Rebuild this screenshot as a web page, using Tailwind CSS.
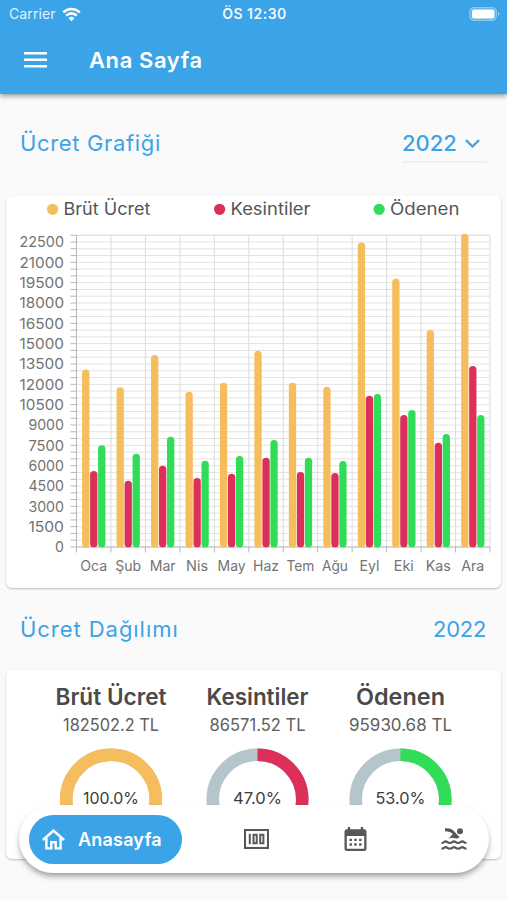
<!DOCTYPE html>
<html lang="tr">
  <head>
    <meta charset="UTF-8" />
    <meta name="viewport" content="width=device-width, initial-scale=1.0" />
    <title>Ana Sayfa</title>
    <script src="https://cdn.jsdelivr.net/npm/@tailwindcss/browser@4"></script>
  </head>
  <body
    class="relative h-[900px] overflow-hidden bg-[#fafafa] font-['Inter',sans-serif] text-[#4a4a4a]"
  >
    <!-- header -->
    <header class="relative h-[94px] bg-[#3ba3e7] text-white shadow-[0_2px_5px_rgba(0,0,0,0.4)]">
      <div class="grid h-7 grid-cols-3 items-center pl-[9px] pr-[7px] text-sm">
        <div class="flex items-center gap-1.5 text-white/85">
          <span class="tracking-[0.1px]">Carrier</span>
          <svg class="h-[15px] w-[19px]" viewBox="0 0 19 15" fill="none" stroke="#fff" stroke-width="2.6">
            <path d="M1.2 5.4a11.8 11.8 0 0 1 16.6 0" />
            <path d="M4.2 8.6a7.5 7.5 0 0 1 10.6 0" />
            <path d="M9.5 14.2 6.6 11.2a4.2 4.2 0 0 1 5.8 0z" fill="#fff" stroke="none" />
          </svg>
        </div>
        <span class="text-center font-semibold tracking-[0.5px] text-white/95">ÖS 12:30</span>
        <svg class="h-[14px] w-[31px] justify-self-end" viewBox="0 0 31 14">
          <rect x=".8" y=".6" width="26.6" height="12.8" rx="4" fill="#fff" fill-opacity=".2" stroke="#fff" stroke-opacity=".4" />
          <rect x="3" y="2.6" width="22.4" height="8.8" rx="2" fill="#fff" />
          <path d="M29 5v4c1.6-.6 1.6-3.4 0-4z" fill="#fff" fill-opacity=".5" />
        </svg>
      </div>
      <div class="flex h-16 items-center pl-6">
        <svg class="h-4 w-[23px]" viewBox="0 0 23 16" fill="#fff">
          <path d="M0 0h23v2.5H0zM0 6.5h23V9H0zM0 13h23v2.5H0z" />
        </svg>
        <h1 class="ml-[42px] text-[22px] font-semibold tracking-[0.6px]">Ana Sayfa</h1>
      </div>
    </header>

    <main class="px-1.5">
      <!-- monthly chart -->
      <div class="flex h-[102px] items-center justify-between pb-1 pl-[14px] pr-[14px] text-[22px] text-[#3ba3e7]">
        <h2 class="tracking-[0.65px]">Ücret Grafiği</h2>
        <button class="mt-[2px] flex h-[38px] w-[85px] items-center justify-between border-b-2 border-[#eeeeee] pr-[7px] font-medium">
          <span>2022</span>
          <svg class="h-[9px] w-[15px]" viewBox="0 0 15 9" fill="none" stroke="currentColor" stroke-width="2.3">
            <path d="m1 1.2 6.5 6.3L14 1.2" />
          </svg>
        </button>
      </div>
      <section class="h-[392px] rounded-md bg-white shadow-[0_1px_2px_rgba(0,0,0,0.25)]">
        <svg id="chart" class="block h-[392px] w-[496px]" viewBox="6 196 496 392"></svg>
      </section>

      <!-- distribution -->
      <div class="flex h-[82px] items-center justify-between pl-[14px] pr-[15px] text-[22px] text-[#3ba3e7]">
        <h2 class="tracking-[0.95px]">Ücret Dağılımı</h2>
        <span class="tracking-[-0.3px]">2022</span>
      </div>
      <section class="h-[189px] rounded-md bg-white shadow-[0_1px_2px_rgba(0,0,0,0.25)]">
        <svg id="rings" class="block h-[189px] w-[496px]" viewBox="6 670 496 189"></svg>
      </section>
    </main>

    <!-- bottom navigation -->
    <nav
      class="absolute bottom-[27px] left-[19px] flex h-[68px] w-[470px] items-center rounded-full bg-white pl-[10px] text-[#575757] shadow-[0_4px_6px_-1px_rgba(0,0,0,0.4)]"
    >
      <a class="flex h-[49px] w-[153px] items-center rounded-full bg-[#3ba3e7] pl-[13px] text-white">
        <svg class="h-[21px] w-[23px]" viewBox="0 0 23 21" fill="none" stroke="currentColor" stroke-width="2.4">
          <path d="M.9 11 11.5 1.6 22.1 11" />
          <path d="M4.4 8.6v10.8h4.9v-6.2h4.4v6.2h4.9V8.6" />
        </svg>
        <span class="ml-[13px] text-[18px] font-semibold tracking-[0.2px]">Anasayfa</span>
      </a>
      <svg class="ml-[62px] h-[20px] w-[25px]" viewBox="0 0 25 20" fill="none" stroke="currentColor">
        <rect x="1" y="1" width="23" height="18" stroke-width="2.1" />
        <path d="M5.8 4.800v10.400" stroke-width="2" />
        <path d="M9.500 5.800h3.200v8.400H9.500zM16.200 5.800h3.200v8.400h-3.200z" stroke-width="2" />
      </svg>
      <svg class="ml-[75px] h-6 w-[23px]" viewBox="0 0 23 24" fill="currentColor">
        <path fill-rule="evenodd" d="M3.8 0h2.4v2.2h10.6V0h2.4v2.2h1A2.3 2.3 0 0 1 22.5 4.5v17.2A2.3 2.3 0 0 1 20.2 24H2.8A2.3 2.3 0 0 1 .5 21.7V4.500A2.3 2.3 0 0 1 2.8 2.2h1zM2.8 9v12.8h17.4V9z" />
        <path d="M5.500 11.700h2.400v2.400H5.500zM10.300 11.700h2.400v2.400h-2.400zM15.100 11.700h2.400v2.400h-2.400zM5.500 16.300h2.400v2.400H5.500zM10.300 16.300h2.400v2.400h-2.400zM15.100 16.300h2.400v2.400h-2.400z" />
      </svg>
      <svg class="ml-[74px] h-[24px] w-[26px]" viewBox="0 0 26 24" fill="currentColor">
        <circle cx="19" cy="4.2" r="3" />
        <path d="M4 1.300c4-.2 6.500.5 8.300 2.300l6.200 6.300c-1.500 1.500-2.900 2-4.500 1.400-2.200-.8-4.500-.9-6.800.6l4.600-4.800C9.800 5 7.500 4.200 4 4.200z" />
        <path d="M.5 16c2.500 0 2.500-1.600 4.200-1.600s1.800 1.600 4.100 1.600 2.500-1.600 4.200-1.600 1.800 1.600 4.100 1.600 2.500-1.600 4.200-1.600 1.800 1.600 4.200 1.600M.5 21.700c2.500 0 2.500-1.600 4.200-1.600s1.800 1.600 4.100 1.600 2.500-1.600 4.200-1.600 1.800 1.600 4.100 1.600 2.500-1.600 4.200-1.600 1.800 1.600 4.200 1.600" fill="none" stroke="currentColor" stroke-width="2.200" />
      </svg>
    </nav>

    <script>
      const months = ["Oca", "Şub", "Mar", "Nis", "May", "Haz", "Tem", "Ağu", "Eyl", "Eki", "Kas", "Ara"];
      const series = [
        { name: "Brüt Ücret", color: "#f5bd5b", x: 47, width: 87,
          values: [13100, 11780, 14160, 11450, 12120, 14480, 12120, 11820, 22470, 19800, 16000, 23100] },
        { name: "Kesintiler", color: "#dc3058", x: 214, width: 80,
          values: [5600, 4890, 6000, 5090, 5400, 6590, 5530, 5460, 11160, 9740, 7690, 13350] },
        { name: "Ödenen", color: "#30dc58", x: 373.5, width: 69.5,
          values: [7500, 6880, 8135, 6365, 6710, 7890, 6585, 6340, 11280, 10100, 8330, 9735] },
      ];
      const left = 76.5, right = 490, base = 547, unit = 305 / 22500;
      const step = (right - left) / 12;
      const yOf = (v) => base - v * unit;
      const line = (x1, y1, x2, y2, color) =>
        `<line x1="${x1}" y1="${y1}" x2="${x2}" y2="${y2}" stroke="${color}"/>`;
      // textLength keeps labels at a fixed width
      const label = (x, y, text, size, width, anchor, fill, weight = 400) =>
        `<text x="${x}" y="${y}" font-size="${size}" textLength="${width}" lengthAdjust="spacingAndGlyphs" text-anchor="${anchor}" fill="${fill}" font-weight="${weight}">${text}</text>`;

      let out = "";
      for (let v = 0; v <= 23000; v += 500) {
        out += line(left, yOf(v), right, yOf(v), v === 23000 ? "#d4d4d4" : "#e3e3e3");
        out += line(left - 6, yOf(v), left, yOf(v), "#b8b8b8");
        if (v % 1500 === 0) {
          const s = String(v);
          out += label(64, yOf(v) + 5.2, s, 14.5, s.length * 8.9, "end", "#737373");
        }
      }
      for (let i = 0; i <= 12; i++) {
        const x = left + i * step;
        out += line(x, yOf(23000), x, base, i ? "#dcdcdc" : "#b8b8b8");
        out += line(x, base, x, base + 5.5, "#b8b8b8");
      }
      out += line(left, base, right, base, "#b8b8b8");
      const labelWidths = [27, 26, 26, 22, 28, 26, 28, 26, 20, 20, 25, 23];
      months.forEach((m, i) => {
        out += label(left + (i + 0.5) * step, 570.5, m, 14, labelWidths[i], "middle", "#737373");
        series.forEach((s, j) => {
          const y = yOf(s.values[i]);
          out += `<rect x="${82.1 + i * step + j * 8}" y="${y}" width="7.3" height="${base - y + 0.3}" rx="3.65" fill="${s.color}"/>`;
        });
      });
      series.forEach((s) => {
        out += `<circle cx="${s.x + 5.6}" cy="209.3" r="5.6" fill="${s.color}"/>`;
        out += label(s.x + 16.5, 215, s.name, 17, s.width, "start", "#555");
      });
      document.getElementById("chart").innerHTML = out;

      const rings = [
        { name: "Brüt Ücret", w: 111, sum: "182502.2 TL", sw: 96, pct: 100, pw: 56, cx: 111, color: "#f5bd5b" },
        { name: "Kesintiler", w: 102, sum: "86571.52 TL", sw: 96, pct: 47, pw: 49, cx: 257.5, color: "#dc3058" },
        { name: "Ödenen", w: 89, sum: "95930.68 TL", sw: 103, pct: 53, pw: 50, cx: 400.5, color: "#30dc58" },
      ];
      document.getElementById("rings").innerHTML = rings
        .map(
          (r) =>
            label(r.cx, 705, r.name, 22.5, r.w, "middle", "#4a4a4a", 600) +
            label(r.cx, 731.3, r.sum, 17, r.sw, "middle", "#606060") +
            `<circle cx="${r.cx}" cy="799.5" r="44.8" fill="none" stroke="#b5c6cb" stroke-width="12.5"/>` +
            `<circle cx="${r.cx}" cy="799.5" r="44.8" fill="none" stroke="${r.color}" stroke-width="12.5" pathLength="100" stroke-dasharray="${r.pct} 100" transform="rotate(-90 ${r.cx} 799.5)"/>` +
            label(r.cx, 804.3, r.pct.toFixed(1) + "%", 16.5, r.pw, "middle", "#3c3c3c")
        )
        .join("");
    </script>
  </body>
</html>
